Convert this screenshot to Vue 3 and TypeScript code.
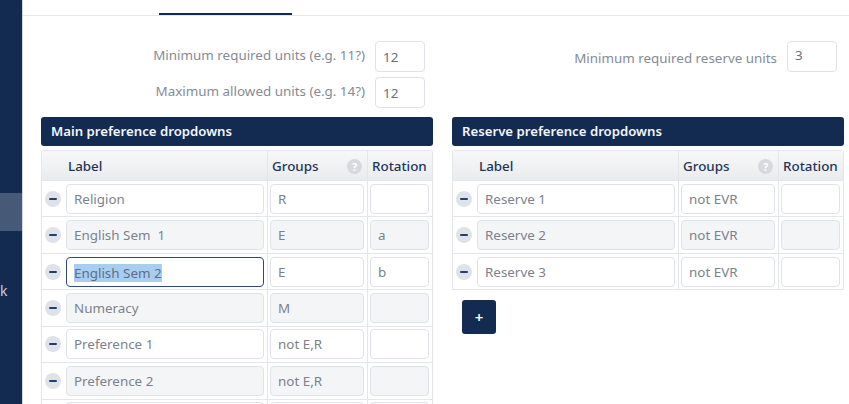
<script setup lang="ts">
interface Row { label: string; groups: string; rot: string; shaded: boolean; focus?: boolean }
const main: Row[] = [
  { label: 'Religion', groups: 'R', rot: '', shaded: false },
  { label: 'English Sem  1', groups: 'E', rot: 'a', shaded: true },
  { label: 'English Sem 2', groups: 'E', rot: 'b', shaded: false, focus: true },
  { label: 'Numeracy', groups: 'M', rot: '', shaded: true },
  { label: 'Preference 1', groups: 'not E,R', rot: '', shaded: false },
  { label: 'Preference 2', groups: 'not E,R', rot: '', shaded: true },
]
const reserve: Row[] = [
  { label: 'Reserve 1', groups: 'not EVR', rot: '', shaded: false },
  { label: 'Reserve 2', groups: 'not EVR', rot: '', shaded: true },
  { label: 'Reserve 3', groups: 'not EVR', rot: '', shaded: false },
]
const panels = [
  { title: 'Main preference dropdowns', rows: main, add: false, more: true },
  { title: 'Reserve preference dropdowns', rows: reserve, add: true, more: false },
]
</script>

<template>
  <div class="page">
    <aside class="sidebar">
      <div class="active"></div>
      <div class="navtext">k</div>
    </aside>
    <main class="content">
      <div class="tabs"><div class="tab"></div></div>
      <div class="columns">
        <section class="col">
          <div class="fields">
            <label class="field"><span class="flabel">Minimum required units (e.g. 11?)</span><span class="num">12</span></label>
            <label class="field"><span class="flabel">Maximum allowed units (e.g. 14?)</span><span class="num">12</span></label>
          </div>
        </section>
        <section class="col">
          <div class="fields right">
            <label class="field"><span class="flabel">Minimum required reserve units</span><span class="num up">3</span></label>
            <div class="field ghost"></div>
          </div>
        </section>
      </div>
      <div class="columns">
        <section v-for="p in panels" :key="p.title" class="col">
          <h2 class="bar">{{ p.title }}</h2>
          <div class="table">
            <div class="tr head">
              <div class="c cl"><span class="hl">Label</span></div>
              <div class="c cg">
                <span>Groups</span>
                <span class="help">?</span>
              </div>
              <div class="c cr">Rotation</div>
            </div>
            <div v-for="r in p.rows" :key="r.label" class="tr">
              <div class="c cl body">
                <span class="minus"><i></i></span>
                <span class="inp grow" :class="{ shaded: r.shaded, focus: r.focus }"><span :class="{ sel: r.focus }">{{ r.label }}</span></span>
              </div>
              <div class="c cg body"><span class="inp grow" :class="{ shaded: r.shaded }">{{ r.groups }}</span></div>
              <div class="c cr body"><span class="inp grow" :class="{ shaded: r.shaded }">{{ r.rot }}</span></div>
            </div>
            <div v-if="p.more" class="tr">
              <div class="c cl body">
                <span class="minus"><i></i></span>
                <span class="inp grow"></span>
              </div>
              <div class="c cg body"><span class="inp grow"></span></div>
              <div class="c cr body"><span class="inp grow"></span></div>
            </div>
          </div>
          <button v-if="p.add" class="add" type="button">+</button>
        </section>
      </div>
    </main>
  </div>
</template>

<style>
html, body { margin: 0; height: 100%; overflow: hidden; background: #fff; }
</style>

<style scoped>
.page {
  display: flex;
  height: 404px;
  overflow: hidden;
  font-family: "Noto Sans", "Open Sans", sans-serif;
  font-size: 13px;
  color: #6f7681;
}
.sidebar {
  flex: 0 0 22px;
  background: #132b50;
  border-right: 1px solid #d4d7dc;
  overflow: hidden;
  padding-top: 193px;
  box-sizing: content-box;
}
.active { height: 38px; background: #465a78; }
.navtext {
  margin-top: 50px;
  color: #c9ced6;
  font-size: 14px;
  line-height: 20px;
}
.content { flex: 1; min-width: 0; padding: 0 5px 0 18px; }
.tabs {
  margin: 0 -5px 0 -18px;
  border-bottom: 1px solid #e5e7ea;
  padding: 13px 0 0 136px;
  box-sizing: border-box;
  height: 16px;
}
.tab { width: 133px; height: 2px; background: #132b50; }
.columns { display: flex; gap: 19px; }
.col { flex: 0 0 392px; }
.fields {
  display: flex;
  flex-direction: column;
  gap: 6px;
  padding: 25px 8px 0 0;
  margin-bottom: 10px;
}
.fields.right { padding-right: 7px; }
.field {
  display: flex;
  justify-content: flex-end;
  align-items: center;
  gap: 10px;
  height: 30px;
}
.flabel { color: #868b94; font-size: 13.4px; padding-bottom: 2px; }
.right .flabel { padding: 3px 0 0; }
.num {
  box-sizing: border-box;
  width: 50px;
  height: 31px;
  border: 1px solid #dfe2e9;
  border-radius: 4px;
  padding: 2px 7px 0;
  line-height: 26px;
  font-size: 13.4px;
  color: #6b7079;
  background: #fff;
}
.num.up { line-height: 22px; }
.bar {
  margin: 0;
  height: 29px;
  line-height: 29px;
  padding-left: 10px;
  background: #132b50;
  color: #f4f5f7;
  border-radius: 3px;
  font-size: 13.2px;
  font-weight: 600;
}
.table {
  margin-top: 4px;
  border: 1px solid #e4e6ea;
  border-bottom: 0;
  border-radius: 3px 3px 0 0;
}
.tr {
  display: grid;
  grid-template-columns: 225px 100px 1fr;
  height: 36.45px;
  border-bottom: 1px solid #e4e6ea;
  box-sizing: border-box;
}
.head {
  height: 30px;
  background: linear-gradient(#f7f8f9, #e9ebee);
  color: #1e3558;
  font-weight: 500;
  font-size: 13.4px;
}
.c { display: flex; align-items: center; min-width: 0; box-sizing: border-box; }
.head .c { padding: 1px 0 0 4px; }
.head .cl { padding-left: 26px; }
.head .cg { justify-content: space-between; padding-right: 5px; }
.cg, .cr { border-left: 1px solid #e4e6ea; }
.help {
  width: 15px;
  height: 15px;
  border-radius: 50%;
  background: #d6d9de;
  color: #fff;
  font-size: 11px;
  font-weight: 700;
  text-align: center;
  line-height: 15px;
}
.cl.body { padding: 0 3px; gap: 5px; }
.cg.body, .cr.body { padding: 0 3px 0 2px; }
.minus {
  flex: 0 0 16px;
  height: 16px;
  border-radius: 50%;
  background: #dfe2e8;
  display: flex;
  align-items: center;
  justify-content: center;
}
.minus i { display: block; width: 8px; height: 2px; background: #20406f; border-radius: 1px; }
.inp {
  box-sizing: border-box;
  height: 30px;
  min-width: 0;
  border: 1px solid #dfe2e9;
  border-radius: 4px;
  padding: 0 7px;
  line-height: 29px;
  font-size: 13.4px;
  color: #7c828c;
  background: #fff;
  white-space: pre;
  overflow: hidden;
}
.grow { flex: 1; }
.shaded { background: #f4f5f7; }
.focus { border-color: #2f4a74; }
.sel { background: #a9cdf0; color: #5c6f85; display: inline-block; line-height: 18px; vertical-align: middle; }
.add {
  display: block;
  width: 34px;
  height: 34px;
  margin: 10px 0 0 10px;
  border: 0;
  border-radius: 3px;
  background: #132b50;
  color: #fff;
  font-family: inherit;
  font-size: 15px;
  font-weight: 600;
  padding: 0;
}
</style>
